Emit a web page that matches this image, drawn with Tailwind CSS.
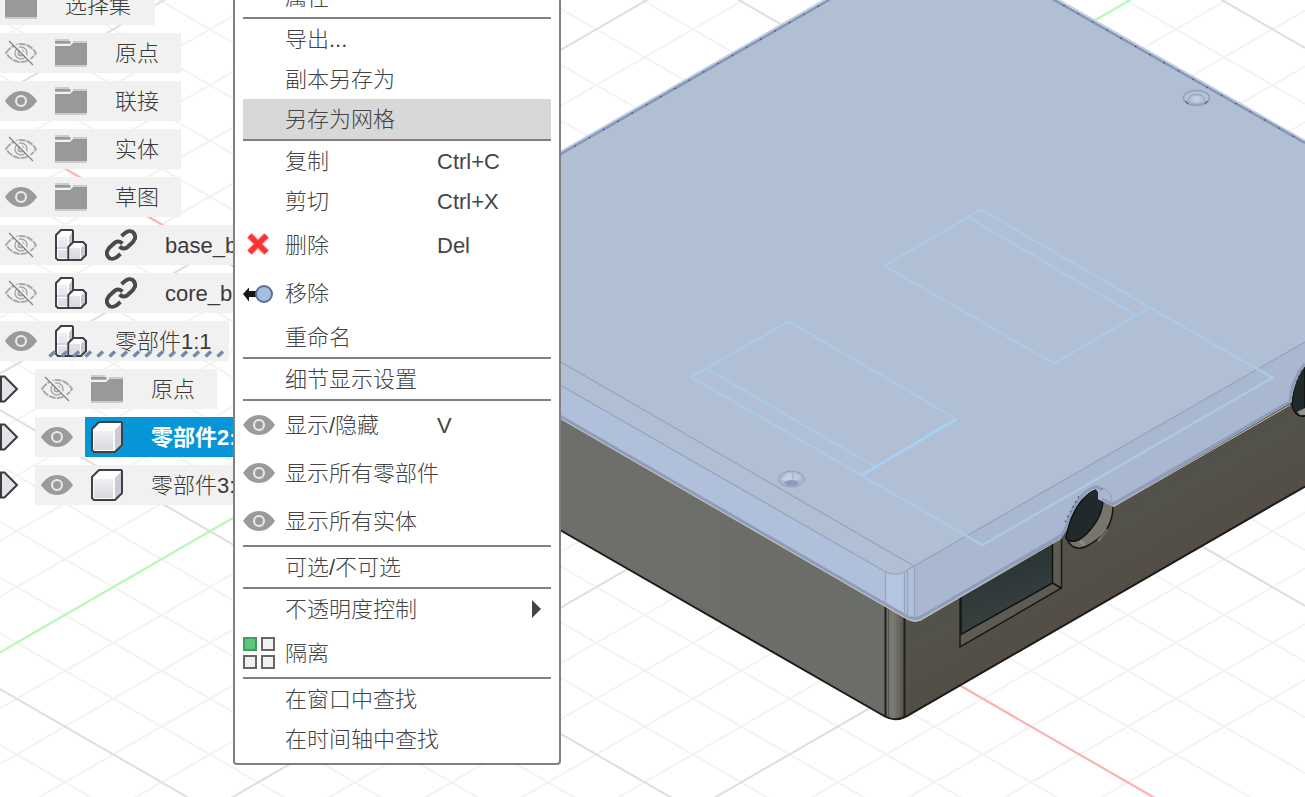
<!DOCTYPE html>
<html lang="zh-CN">
<head>
<meta charset="utf-8">
<title>CAD</title>
<script src="https://cdn.jsdelivr.net/npm/@tailwindcss/browser@4"></script>
</head>
<body class="w-[1305px] h-[797px] overflow-hidden bg-white font-['Liberation_Sans','Noto_Sans_CJK_SC',sans-serif] text-[22px] leading-none text-[#3a3a3a]">
<svg class="absolute w-0 h-0">
  <defs>
    <symbol id="eye" viewBox="0 0 32 20">
      <path d="M0 10C4 4 9 0 16 0s12 4 16 10c-4 6-9 10-16 10S4 16 0 10Z" fill="#9b9b9b"/>
      <circle cx="16" cy="10" r="5" fill="none" stroke="#ececec" stroke-width="2"/>
    </symbol>
    <symbol id="eyeoff" viewBox="0 0 32 26">
      <g fill="none" stroke="#a8a8a8"><path d="M1 13C5 7 10 4 16 4S27 7 31 13c-4 6-9 9-15 9S5 19 1 13Z" stroke-width="1.900" stroke-dasharray="7 1"/>
      <circle cx="16" cy="13" r="6" stroke-width="1.500"/><circle cx="16" cy="13" r="2.600" stroke-width="1.800"/></g>
      <path d="M6 .5 30 25" stroke="#f1f1f1" stroke-width="2"/><path d="M4 1 28 25" stroke="#828282" stroke-width="1.200"/>
    </symbol>
    <symbol id="folder" viewBox="0 0 32 28">
      <path d="M0 0h14v2h2v3H0ZM18 2h14v3H18ZM0 25h32v3H0Z" fill="#ccc"/>
      <path d="M0 2h15v2.500H0ZM0 7h15l3-3h14v22H0Z" fill="#999"/>
    </symbol>
    <symbol id="box" viewBox="0 0 32 32">
      <path d="M1 8 8 1h23v23l-7 7H1Z" fill="#fdfdfe"/><path d="M3 10h19v19H3Z" fill="url(#face)"/><path d="M24 9 30 3v20l-6 7Z" fill="#c9cad3"/>
      <path d="M1 8 8 1h22l1 1v22l-7 7H3l-2-2Z" fill="none" stroke="#3f4046" stroke-width="2"/>
    </symbol>
    <linearGradient id="face" x2="0" y2="1"><stop stop-color="#eff0f4"/><stop offset="1" stop-color="#d8dae0"/></linearGradient>
    <symbol id="parts" viewBox="0 0 32 32">
      <path d="M1 5 6 1h12v12h13v13l-5 5H1Z" fill="#fff"/>
      <path d="M3 8h9v10H3Zm0 13h9v8H3ZM15 19h10v11H15Z" fill="url(#face)"/><path d="M14 8l3-5v10l-3 4ZM26 19l4-4v11l-4 4Z" fill="#c5c7d1"/><path d="M2 19h11" stroke="#aaacb8"/>
      <path d="M1 6 6 1h11l1 1v11h10l3 3v10l-5 5H3l-2-2ZM13.300 31V18l5-5" fill="none" stroke="#3f4046" stroke-width="2"/>
    </symbol>
    <symbol id="link" viewBox="0 0 32 32">
      <g fill="none" stroke="#4a4a4a" stroke-width="3.900" stroke-linejoin="round"><path d="M16.500 7 21 3.300Q24 1.500 27 2.500 31 5 30 9.500L28 13 22 18.500Q18 21 14.500 17.500"/><path d="M15.500 25 11 28.700Q8 30.500 5 29.500 1 27 2 22.500L4 19 10 13.500Q14 11 17.500 14.500"/></g>
    </symbol>
    <symbol id="arrow" viewBox="0 0 20 28"><path d="M1 1.500H4.500L17 14 4.500 26.500H1Z" fill="#e4e4e8" stroke="#3c3c40" stroke-width="2"/></symbol>
  </defs>
</svg>

<main class="relative w-full h-full overflow-hidden">
  <!-- 3D viewport -->
  <svg class="absolute inset-0" width="1305" height="797" viewBox="0 0 1305 797">
    <defs>
      <linearGradient id="right" gradientUnits="userSpaceOnUse" x1="1050" y1="520" x2="1100" y2="606"><stop offset=".35" stop-color="#52524b"/><stop offset="1" stop-color="#534d45"/></linearGradient>
      <linearGradient id="glass" x2=".3" y2="1"><stop stop-color="#252f31"/><stop offset="1" stop-color="#394140"/></linearGradient>
      <linearGradient id="post"><stop stop-color="#6b6d66"/><stop offset=".4" stop-color="#797b73"/><stop offset="1" stop-color="#53514a"/></linearGradient>
      <linearGradient id="leftf" x2="1" y2="0"><stop stop-color="#6e6f6b"/><stop offset="1" stop-color="#6b6d68"/></linearGradient>
    </defs>
    <g fill="none" stroke-width="2">
      <path id="minor" stroke="#f3f3f3"/>
      <path id="major" stroke="#dedede"/>
      <path d="M0 131.200 1305 884.700" stroke="#ffb0b0"/>
      <path d="M0 652.500 1305 -101" stroke="#b0ffb0"/>
    </g>
    <!-- enclosure body -->
    <path d="M560 400 885 590V717L560 530Z" fill="url(#leftf)"/>
    <path d="M903 600 1305 372V487L905 717Z" fill="url(#right)"/>
    <path d="M885 590H905V717Q895 723 885 717Z" fill="url(#post)"/>
    <path d="M560 530 885 716.500Q895 722 906 716.500L1305 486.500" fill="none" stroke="#1b1b19" stroke-width="2"/>
    <path d="M885.500 600V717M904.500 605V717" stroke="#20201d" stroke-width="2"/>
    <path d="M888.500 600V717M907 610V715" stroke="#555650" stroke-width="1"/>
    <path d="M960 590V647L1061.500 588V535Z" fill="#5e5b52" stroke="#1a1b19" stroke-width="1.500"/>
    <path d="M961 592V634.500L1052.500 583V540Z" fill="url(#glass)" stroke="#101412" stroke-width="1.500"/>
    <path d="M1052.500 583 1061 588" stroke="#111" stroke-width="1.500"/>
    <path d="M1066 536C1069 547 1077 551 1087 546 1103 538 1113 525 1113 506L1098 490Z" fill="#77756c" stroke="#151513" stroke-width="1.500"/>
    <path d="M1098 541 1107 529M1085 545 1080 541" stroke="#b0ada2" stroke-width="3" opacity=".4"/>
    <path d="M1066 538C1068 522 1079 496 1096 489C1108 494 1103 515 1091 529 1081 541 1072 545 1066 538Z" fill="#202a2d" stroke="#0c1010" stroke-width="1.200"/>
    <path d="M1292 404C1293 412 1298 418 1305 416V365L1295 380Z" fill="#202a2b" stroke="#111" stroke-width="1.500"/>
    <path d="M1297 412 1305 408V415H1300Z" fill="#92918a"/>
    <!-- highlighted lid -->
    <path d="M560 152 833 -4H1050L1305 141V366C1298 375 1293 387 1291.500 402L1113 506.500 1102 501 1098 499V492L1096 489C1082 493 1070 513 1066.500 530L1062 537 921 620Q914 623 907 619L560 418Z" fill="#b0bfd3"/>
    <path d="M560 385 885 571.500Q895 577 905 571.500L914 566V621L907 619 560 418Z" fill="#b0c0da"/>
    <path d="M914 566 1305 342V366C1298 375 1293 387 1291.500 402L1113 506.500 1102 501 1098 499V492L1096 489C1082 493 1070 513 1066.500 530L1062 537 921 620 914 622Z" fill="#a9b8d0"/>
    <path d="M886 573Q895 577 904 573V616L886 604Z" fill="#b4c5e2"/>
    <path d="M560 416 907 616.500Q914 620 921 617L1061 535.500 1065.500 529C1070 510 1082 489 1097 486.500L1102 490" fill="none" stroke="#8f9dba" stroke-width="3"/>
    <path d="M1102 499 1113 504 1290 401.500C1291 385 1298 371 1305 364" fill="none" stroke="#8f9dba" stroke-width="3"/>
    <path d="M560 418.500 907 619Q914 623 921 620L1062 538M1113 507 1290 405" fill="none" stroke="#c7c2bd" stroke-width="1"/>
    <path d="M560 154.500 834 -3M1049 -3 1305 143" stroke="#8797b4" stroke-width="2.500"/>
    <path d="M560 154.500 834 -3M1049 -3 1305 143" stroke="#44506a" stroke-width="1.200" stroke-dasharray="1.500 15"/>
    <path d="M560 152 830 -3.500M1053 -3.500 1305 140.500" stroke="#bccae1" stroke-width="1.500"/>
    <path d="M1065 522 1080 494M1102 488 1104 490M1296 382 1302 370" stroke="#344158" stroke-width="1.200" stroke-dasharray="1.500 4"/>
    <g fill="none" stroke="#94a4bb" stroke-width="1.200">
      <path d="M560 361.500 914 566 1305 342M560 385 885 571.500Q895 577 905 571.500L914 566M885.500 572V605M904.500 572V616M914.500 567V619M907.500 571V617"/>
      <path d="M1102 488Q1112 490 1112 503"/>
    </g>
    <!-- sketch lines -->
    <g fill="none" stroke="#adc9e8" stroke-width="2.400">
      <path d="M1150 307.500 981 209.500 884.500 266 1054 363.500 1150 307.500 1272.500 377.700 982.500 545 691 377 789 321.500 956.500 419"/>
      <path d="M968.500 217.500 1136 315.500M706.500 368.500 874 466"/>
      <path d="M861 475.500 956.500 419" stroke="#a9d0f3" stroke-width="2.800"/>
      <path d="M956.500 419 1054 363.500" stroke-width="1" opacity=".6"/>
    </g>
    <g fill="none" stroke="#8fa0b9">
      <g transform="translate(791.500 479)"><ellipse rx="13" ry="8" fill="#a9b9d1"/><path d="M-10 1Q-5-7 0-6L1 3Z" fill="#c3d1e7" stroke="none"/><path d="M1 2 3-6Q8-5 10 0Z" fill="#bccbe2" stroke="none"/><ellipse cy="4" rx="7" ry="3" fill="#8d9db9" stroke="none"/></g>
      <g transform="translate(1196.500 98)"><ellipse rx="13" ry="7.500" stroke-width="1.500" fill="#b3c2d6"/><ellipse cy="1.500" rx="8" ry="5"/><ellipse cy="1" rx="4" ry="3" fill="#c2d0e2" stroke="none"/><path d="M-11 3-8 6M11 3 8 6" stroke="#5c6b84" stroke-width="1.500"/></g>
    </g>
  </svg>

  <!-- browser tree -->
  <div class="relative w-[233px] -mt-[15px] flex flex-col items-start gap-2 overflow-hidden whitespace-nowrap [&>div]:h-10 [&>div]:flex [&>div]:items-center [&>div]:shrink-0 [&_span]:pt-0.5 font-light">
    <div class="bg-[#f1f1f1] w-[155px] pl-[5px]"><svg class="w-8 h-7"><use href="#folder"/></svg><span class="ml-7">选择集</span></div>
    <div class="bg-[#f1f1f1] w-[181px] pl-[5px]"><svg class="w-8 h-[26px]"><use href="#eyeoff"/></svg><svg class="w-8 h-7 ml-[18px]"><use href="#folder"/></svg><span class="ml-7">原点</span></div>
    <div class="bg-[#f1f1f1] w-[181px] pl-[5px]"><svg class="w-8 h-5"><use href="#eye"/></svg><svg class="w-8 h-7 ml-[18px]"><use href="#folder"/></svg><span class="ml-7">联接</span></div>
    <div class="bg-[#f1f1f1] w-[181px] pl-[5px]"><svg class="w-8 h-[26px]"><use href="#eyeoff"/></svg><svg class="w-8 h-7 ml-[18px]"><use href="#folder"/></svg><span class="ml-7">实体</span></div>
    <div class="bg-[#f1f1f1] w-[181px] pl-[5px]"><svg class="w-8 h-5"><use href="#eye"/></svg><svg class="w-8 h-7 ml-[18px]"><use href="#folder"/></svg><span class="ml-7">草图</span></div>
    <div class="bg-[#f1f1f1] w-[260px] pl-[5px]"><svg class="w-8 h-[26px]"><use href="#eyeoff"/></svg><svg class="w-8 h-8 ml-[18px]"><use href="#parts"/></svg><svg class="w-8 h-8 ml-[18px]"><use href="#link"/></svg><span class="ml-7">base_b</span></div>
    <div class="bg-[#f1f1f1] w-[260px] pl-[5px]"><svg class="w-8 h-[26px]"><use href="#eyeoff"/></svg><svg class="w-8 h-8 ml-[18px]"><use href="#parts"/></svg><svg class="w-8 h-8 ml-[18px]"><use href="#link"/></svg><span class="ml-7">core_b</span></div>
    <div class="relative bg-[#f1f1f1] w-[229px] pl-[5px]"><svg class="w-8 h-5"><use href="#eye"/></svg><svg class="w-8 h-8 ml-[18px]"><use href="#parts"/></svg><span class="ml-7">零部件1:1</span>
      <svg class="absolute left-[48px] top-[29px] w-[178px] h-2"><defs><pattern id="hatch" width="12" height="8" patternUnits="userSpaceOnUse"><path d="M1.500 6.500 7 1.500" stroke="#7488ab" stroke-width="3.500"/></pattern></defs><rect width="178" height="8" fill="url(#hatch)"/></svg>
    </div>
    <div><svg class="w-5 h-7"><use href="#arrow"/></svg><div class="ml-[15px] h-10 w-[182px] bg-[#f1f1f1] flex items-center pl-1.5"><svg class="w-8 h-[26px]"><use href="#eyeoff"/></svg><svg class="w-8 h-7 ml-[18px]"><use href="#folder"/></svg><span class="ml-7">原点</span></div></div>
    <div><svg class="w-5 h-7"><use href="#arrow"/></svg><div class="ml-[15px] h-10 w-[50px] bg-[#f1f1f1] flex items-center pl-1.5"><svg class="w-8 h-5"><use href="#eye"/></svg></div><div class="h-10 w-[180px] bg-[#0696d7] flex items-center pl-1.5 text-white font-bold"><svg class="w-8 h-8"><use href="#box"/></svg><span class="ml-7">零部件2:</span></div></div>
    <div><svg class="w-5 h-7"><use href="#arrow"/></svg><div class="ml-[15px] h-10 w-[230px] bg-[#f1f1f1] flex items-center pl-1.5"><svg class="w-8 h-5"><use href="#eye"/></svg><svg class="w-8 h-8 ml-[18px]"><use href="#box"/></svg><span class="ml-7">零部件3:</span></div></div>
  </div>

  <!-- context menu -->
  <div class="absolute left-[233px] top-0 w-[328px] h-[765px] overflow-hidden rounded-b-[4px] border-2 border-t-0 border-[#808080] bg-white px-2 text-[#444] font-light whitespace-nowrap">
    <ul class="-mt-[23px] [&>li]:flex [&>li]:items-center [&_i]:w-[42px] [&_i]:shrink-0 [&_b]:w-[152px] [&_b]:font-light [&_b]:pt-0.5 [&_span]:pt-0.5">
      <li class="h-10"><i></i><b>属性</b></li>
      <li class="h-[42px] border-t-2 border-[#808080]"><i></i><b>导出...</b></li>
      <li class="h-10"><i></i><b>副本另存为</b></li>
      <li class="h-10 bg-[#d8d8d8]"><i></i><b>另存为网格</b></li>
      <li class="h-[42px] border-t-2 border-[#808080]"><i></i><b>复制</b><span>Ctrl+C</span></li>
      <li class="h-10"><i></i><b>剪切</b><span>Ctrl+X</span></li>
      <li class="h-12"><i><svg class="ml-1 -mt-0.5 w-[22px] h-[22px]" viewBox="0 0 22 22"><path d="M2.500 2.500 19.500 19.500M19.500 2.500 2.500 19.500" stroke="#ff8f8f" stroke-width="7"/><path d="M2.500 2.500 19.500 19.500M19.500 2.500 2.500 19.500" stroke="#fb3232" stroke-width="5"/></svg></i><b>删除</b><span>Del</span></li>
      <li class="h-12"><i><svg class="mt-0.5 w-8 h-5" viewBox="0 0 32 20"><path d="M0 10 6 3.500V7h7v6H6v4.500Z" fill="#161616"/><circle cx="21" cy="10" r="8" fill="#a2bfe3" stroke="#5c6f98" stroke-width="2"/></svg></i><b>移除</b></li>
      <li class="h-10"><i></i><b>重命名</b></li>
      <li class="h-[42px] border-t-2 border-[#808080]"><i></i><b>细节显示设置</b></li>
      <li class="h-[50px] border-t-2 border-[#808080]"><i><svg class="w-8 h-5"><use href="#eye"/></svg></i><b>显示/隐藏</b><span>V</span></li>
      <li class="h-12"><i><svg class="w-8 h-5"><use href="#eye"/></svg></i><b>显示所有零部件</b></li>
      <li class="h-12"><i><svg class="w-8 h-5"><use href="#eye"/></svg></i><b>显示所有实体</b></li>
      <li class="h-[42px] border-t-2 border-[#808080]"><i></i><b>可选/不可选</b></li>
      <li class="h-[42px] border-t-2 border-[#808080]"><i></i><b>不透明度控制</b><svg class="ml-auto mr-2.5 w-[9px] h-[18px]" viewBox="0 0 9 18"><path d="M0 0 9 9 0 18Z" fill="#444"/></svg></li>
      <li class="h-12"><i><svg class="w-8 h-8" viewBox="0 0 32 32" fill="#f1f1f1" stroke="#666" stroke-width="2"><path d="M19 1H31V13H19ZM1 19H13V31H1ZM19 19H31V31H19Z"/><path d="M1 1H13V13H1Z" fill="#5bc67f" stroke="#3f9e5c"/></svg></i><b>隔离</b></li>
      <li class="h-[42px] border-t-2 border-[#808080]"><i></i><b>在窗口中查找</b></li>
      <li class="h-10"><i></i><b>在时间轴中查找</b></li>
    </ul>
  </div>
</main>
<script>
  // Isometric ground grid: every fifth line is a major one.
  const step = 55.78, rise = 1305 * 0.5774;
  let minor = '', major = '';
  for (let i = -18; i <= 14; i++) {
    const d = 131.2 + i * step, u = 652.5 + i * step;
    const seg = `M0 ${d}L1305 ${d + rise}M0 ${u}L1305 ${u - rise}`;
    if (i % 5) minor += seg; else major += seg;
  }
  document.getElementById('minor').setAttribute('d', minor);
  document.getElementById('major').setAttribute('d', major);
</script>
</body>
</html>
